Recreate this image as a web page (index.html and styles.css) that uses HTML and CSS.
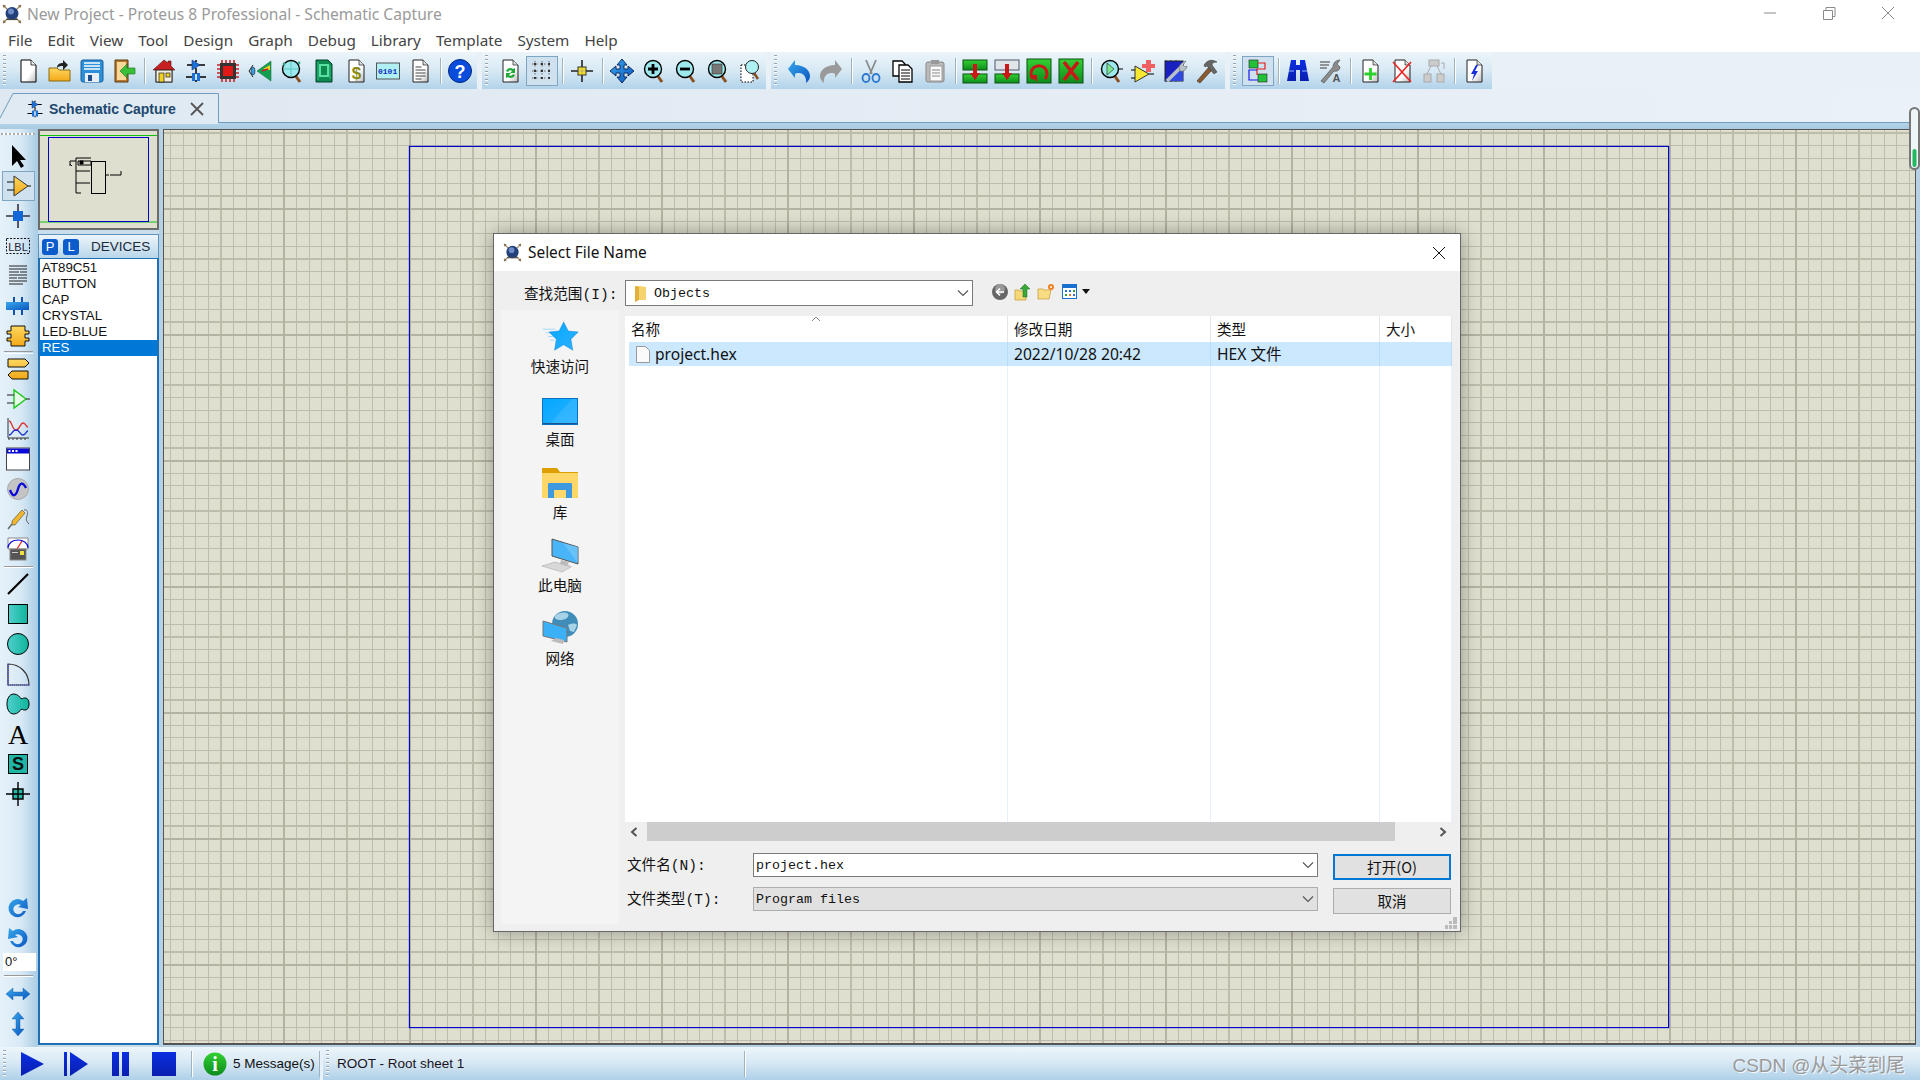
FILE: index.html
```html
<!DOCTYPE html>
<html lang="zh">
<head>
<meta charset="utf-8">
<title>New Project - Proteus 8 Professional - Schematic Capture</title>
<link rel="stylesheet" href="styles.css">
</head>
<body>
<svg class="defs" width="0" height="0">
  <defs>
    <linearGradient id="gB" x1="0" y1="0" x2="1" y2="1"><stop offset="0" stop-color="#39a9ec"/><stop offset="1" stop-color="#0a55c0"/></linearGradient>
    <linearGradient id="gV" x1="0" y1="0" x2="0" y2="1"><stop offset="0" stop-color="#0a2ee0"/><stop offset="1" stop-color="#0a1fb0"/></linearGradient>
    <linearGradient id="gY" x1="0" y1="0" x2="0" y2="1"><stop offset="0" stop-color="#ffd860"/><stop offset="1" stop-color="#f2a818"/></linearGradient>
    <linearGradient id="gG" x1="0" y1="0" x2="0" y2="1"><stop offset="0" stop-color="#33d033"/><stop offset="1" stop-color="#0c8c1c"/></linearGradient>
    <linearGradient id="gT" x1="0" y1="0" x2="1" y2="0"><stop offset="0" stop-color="#4fd0cc"/><stop offset="1" stop-color="#10b49c"/></linearGradient>
    <linearGradient id="gM" x1="0" y1="0" x2="1" y2="1"><stop offset="0" stop-color="#00a8ff"/><stop offset="1" stop-color="#30b0ff"/></linearGradient>
    <linearGradient id="gP" x1="0" y1="0" x2="1" y2="1"><stop offset=".6" stop-color="#fff"/><stop offset="1" stop-color="#b8b8b8"/></linearGradient>
    <symbol id="logo" viewBox="0 0 20 20">
      <path d="M1 1L19 19M19 1L1 19" stroke="#9c8258" stroke-width="1.200" fill="none"/>
      <path d="M1 1l3 .5-2.500 2.500zM19 1l-3 .5 2.500 2.500zM1 19l3-.5-2.500-2.500zM19 19l-3-.5 2.500-2.500z" fill="#7a6440"/>
      <circle cx="10" cy="9.500" r="6.500" fill="#24407a"/><circle cx="9" cy="7.500" r="3" fill="#6f8cc8"/>
      <path d="M4.500 15.500h11" stroke="#444" stroke-width="1.200"/>
    </symbol>
    <symbol id="schem" viewBox="0 0 24 24">
      <path d="M3 6h18M12 1v2M12 9v4" stroke="#000" stroke-width="1.500" fill="none"/>
      <path d="M8 1l8 5-8 5z" fill="#1a70d8" stroke="#103070" stroke-width=".6"/>
      <path d="M2 18h6M16 18h6M12 13v2M12 21v2" stroke="#000" stroke-width="1.500" fill="none"/>
      <rect x="8" y="14" width="3" height="8" fill="#1a70d8"/><rect x="13" y="14" width="3" height="8" fill="#1a70d8"/>
    </symbol>
    <symbol id="mag" viewBox="0 0 24 24">
      <path d="M15 16l5 7" stroke="#8a4f20" stroke-width="3" fill="none"/>
      <circle cx="11" cy="10" r="8.500" fill="#9ce8ec" stroke="#000" stroke-width="1.400"/>
    </symbol>
    <symbol id="page" viewBox="0 0 24 24">
      <path d="M5 1h10l5 5v17H5z" fill="url(#gP)" stroke="#222"/><path d="M15 1v5h5" fill="#ddd" stroke="#222" stroke-width=".7"/>
    </symbol>
  </defs>
</svg>

<div class="app">
  <header class="titlebar">
    <svg class="logo"><use href="#logo"/></svg>
    <span class="title">New Project - Proteus 8 Professional - Schematic Capture</span>
    <div class="winctl">
      <svg width="14" height="14" viewBox="0 0 14 14"><path d="M1 7h12" stroke="#8a8a8a"/></svg>
      <svg width="14" height="14" viewBox="0 0 14 14"><path d="M1.500 4.500h9v9h-9zM4 4.500V1.500h9v9h-2.500" fill="none" stroke="#8a8a8a"/></svg>
      <svg width="14" height="14" viewBox="0 0 14 14"><path d="M1 1l12 12M13 1L1 13" stroke="#8a8a8a"/></svg>
    </div>
  </header>

  <nav class="menubar">
    <span>File</span><span>Edit</span><span>View</span><span>Tool</span><span>Design</span><span>Graph</span><span>Debug</span><span>Library</span><span>Template</span><span>System</span><span>Help</span>
  </nav>

  <div class="toolbar">
    <div class="seg seg1">
      <i class="grip"></i>
      <div class="btn"><svg class="ic" viewBox="0 0 24 24"><path d="M5 1h10l5 5v17H5z" fill="url(#gP)" stroke="#000"/><path d="M15 1v5h5" fill="#eee" stroke="#000" stroke-width=".7"/></svg></div>
      <div class="btn"><svg class="ic" viewBox="0 0 24 24"><path d="M1 9h8l2 2h11v11H1z" fill="url(#gY)" stroke="#8a6a10"/><path d="M9 9c0-4 3-5 6-5V1l5 5-5 5V7c-2 0-4 0-6 2z" fill="#222"/></svg></div>
      <div class="btn"><svg class="ic" viewBox="0 0 24 24"><rect x="1" y="1" width="22" height="22" rx="2" fill="#2b90d9" stroke="#1a5f9c"/><path d="M4 4h16M4 7h16M4 10h16" stroke="#fff" stroke-width="1.600"/><rect x="5" y="14" width="14" height="9" fill="#e8eef4"/><rect x="8" y="16" width="4" height="6" fill="#1a4f8c"/></svg></div>
      <div class="btn"><svg class="ic" viewBox="0 0 24 24"><path d="M3 1h13v22H3z" fill="#b87a30" stroke="#5a3a10"/><path d="M5 3h9v18H5z" fill="#f6d99a"/><path d="M23 9h-8V5l-7 7 7 7v-4h8z" fill="#38c038" stroke="#187018" stroke-width=".6"/></svg></div>
      <i class="sep"></i>
      <div class="btn"><svg class="ic" viewBox="0 0 24 24"><path d="M12 1L1 11h3v12h16V11h3l-4-4V2h-3v2z" fill="#c82020" stroke="#501010" stroke-width=".6"/><rect x="4" y="11" width="16" height="12" fill="#f4efe0" stroke="#222"/><rect x="7" y="14" width="5" height="9" fill="#f0d020" stroke="#222" stroke-width=".7"/><rect x="14" y="14" width="4" height="4" fill="#f0d020" stroke="#222" stroke-width=".7"/></svg></div>
      <div class="btn"><svg class="ic"><use href="#schem"/></svg></div>
      <div class="btn"><svg class="ic" viewBox="0 0 24 24"><path d="M6 1v22M10 1v22M14 1v22M18 1v22M1 6h22M1 10h22M1 14h22M1 18h22" stroke="#d02020" stroke-width="1.600"/><rect x="4" y="4" width="16" height="16" fill="#333"/><rect x="7" y="7" width="10" height="10" fill="#e01818"/></svg></div>
      <div class="btn"><svg class="ic" viewBox="0 0 24 24"><path d="M5 6L1 12l4 6" fill="none" stroke="#222"/><ellipse cx="5" cy="12" rx="2" ry="4" fill="#38a0e0" stroke="#222" stroke-width=".6"/><path d="M23 2v20L9 12z" fill="#12a050" stroke="#0c6030" stroke-width=".5"/><path d="M15 10l7-4v5z" fill="#f0d020"/><path d="M14 12l6-2" stroke="#d02020" stroke-width="1.600"/></svg></div>
      <div class="btn"><svg class="ic"><use href="#mag"/><path d="M4 10h14M11 3v14" stroke="#5cc8c0"/><circle cx="4" cy="5" r="1.400" fill="#3a8"/><circle cx="19" cy="4" r="1.400" fill="#3a8"/></svg></div>
      <div class="btn"><svg class="ic" viewBox="0 0 24 24"><path d="M4 1h12l4 4v18H4z" fill="#0e8a50" stroke="#064028"/><path d="M8 6h8v11H8z" fill="none" stroke="#5ae0a0" stroke-width="2"/><path d="M6 3v18M18 6v14" stroke="#30c080"/></svg></div>
      <div class="btn"><svg class="ic"><use href="#page"/><text class="svgt dollar" x="12.500" y="19.500" text-anchor="middle">$</text></svg></div>
      <div class="btn"><svg class="ic" viewBox="0 0 24 24"><rect x=".5" y="4" width="23" height="16" fill="#aef0f4" stroke="#555"/><text class="svgt bin" x="2" y="15">0101</text></svg></div>
      <div class="btn"><svg class="ic"><use href="#page"/><path d="M7.500 8h6M7.500 11h10M7.500 14h10M7.500 17h10M7.500 20h6" stroke="#444"/></svg></div>
      <i class="sep"></i>
      <div class="btn"><svg class="ic" viewBox="0 0 24 24"><circle cx="12" cy="12" r="11.500" fill="#0a4cdc" stroke="#042a80"/><text class="svgt help" x="12" y="18.500" text-anchor="middle">?</text></svg></div>
    </div>

    <div class="seg seg2">
      <i class="grip"></i>
      <div class="btn"><svg class="ic"><use href="#page"/><path d="M8 12c1-3 5-4 7-2l2-1v5h-5l2-2c-1-1-3-1-4 1zM17 16c-1 3-5 4-7 2l-2 1v-5h5l-2 2c1 1 3 1 4-1z" fill="#22a838"/></svg></div>
      <div class="btn on"><svg class="ic" viewBox="0 0 24 24"><path d="M2 5h20M2 12h20M2 19h20M5 2v20M12 2v20M19 2v20" stroke="#666" stroke-dasharray="1.500 2.500" fill="none"/><path d="M4 4h2v2H4zM11 4h2v2h-2zM18 4h2v2h-2zM4 11h2v2H4zM11 11h2v2h-2zM18 11h2v2h-2zM4 18h2v2H4zM11 18h2v2h-2zM18 18h2v2h-2z" fill="#333"/></svg></div>
      <i class="sep"></i>
      <div class="btn"><svg class="ic" viewBox="0 0 24 24"><path d="M1 12h22M12 1v22" stroke="#222" stroke-width="1.600"/><rect x="8" y="8" width="8" height="8" fill="#f6e020" stroke="#333"/><path d="M12 8v8M8 12h8" stroke="#999" stroke-width=".6"/></svg></div>
      <i class="sep"></i>
      <div class="btn"><svg class="ic" viewBox="0 0 24 24"><path d="M12 0l5 6h-3v4h4V7l6 5-6 5v-3h-4v4h3l-5 6-5-6h3v-4H6v3l-6-5 6-5v3h4V6H7z" fill="url(#gB)" stroke="#0a2050" stroke-width=".9"/></svg></div>
      <div class="btn"><svg class="ic"><use href="#mag"/><path d="M6 10h10M11 5v10" stroke="#000" stroke-width="2.800"/></svg></div>
      <div class="btn"><svg class="ic"><use href="#mag"/><path d="M6 10h10" stroke="#000" stroke-width="2.800"/></svg></div>
      <div class="btn"><svg class="ic"><use href="#mag"/><rect x="6" y="5" width="10" height="10" fill="#777" stroke="#333" stroke-width=".6"/></svg></div>
      <div class="btn"><svg class="ic" viewBox="0 0 24 24"><rect x="3" y="6" width="12" height="17" fill="#fff" stroke="#000" stroke-dasharray="1.500 1.500"/><path d="M16 14l4 6" stroke="#8a4f20" stroke-width="2.500"/><circle cx="14" cy="8" r="6.500" fill="#aef0f4" stroke="#222"/></svg></div>
    </div>

    <div class="seg seg3">
      <i class="grip"></i>
      <div class="btn"><svg class="ic" viewBox="0 0 24 24"><path d="M1 10l7-9v5c9 0 15 5 15 11 0 2-1 5-4 7 1-6-3-10-7-10-2 0-3 0-4 1v4z" fill="url(#gB)"/></svg></div>
      <div class="btn"><svg class="ic" viewBox="0 0 24 24"><path d="M23 10L16 1v5C7 6 1 11 1 17c0 2 1 5 4 7-1-6 3-10 7-10 2 0 3 0 4 1v4z" fill="#9a9a9a"/></svg></div>
      <i class="sep"></i>
      <div class="btn"><svg class="ic" viewBox="0 0 24 24"><path d="M7 1l6 14M17 1l-6 14" stroke="#8a8a8a" stroke-width="1.800"/><ellipse cx="7" cy="19" rx="3.500" ry="4" fill="none" stroke="#2a78d0" stroke-width="1.800"/><ellipse cx="17" cy="19" rx="3.500" ry="4" fill="none" stroke="#2a78d0" stroke-width="1.800"/></svg></div>
      <div class="btn"><svg class="ic" viewBox="0 0 24 24"><path d="M2 2h9l3 3v12H2z" fill="#fff" stroke="#000" stroke-width="1.300"/><path d="M8 6h9l4 4v13H8z" fill="#fff" stroke="#000" stroke-width="1.300"/><path d="M10 11h9M10 14h9M10 17h9M10 20h9" stroke="#000"/></svg></div>
      <div class="btn"><svg class="ic" viewBox="0 0 24 24"><rect x="3" y="3" width="18" height="20" rx="2" fill="#bbb" stroke="#888"/><rect x="8" y="1" width="8" height="4" fill="#999"/><rect x="7" y="7" width="12" height="15" fill="#fafafa" stroke="#999"/><path d="M9 11h8M9 14h8M9 17h8" stroke="#888"/></svg></div>
      <i class="sep"></i>
      <div class="btn"><svg class="ic" viewBox="0 0 24 24"><rect width="24" height="10" fill="url(#gG)" stroke="#0a5010" y="1"/><rect y="15" width="24" height="9" fill="url(#gG)" stroke="#0a5010"/><path d="M10 5h4v9h3l-5 7-5-7h3z" fill="#c81818"/></svg></div>
      <div class="btn"><svg class="ic" viewBox="0 0 24 24"><rect y="1" width="24" height="10" fill="#dfe6ea" stroke="#556"/><rect y="15" width="24" height="9" fill="url(#gG)" stroke="#0a5010"/><path d="M10 5h4v9h3l-5 7-5-7h3z" fill="#c81818"/></svg></div>
      <div class="btn"><svg class="ic" viewBox="0 0 24 24"><rect width="24" height="24" fill="url(#gG)" stroke="#0a5010"/><path d="M6 20a8 8 0 1 1 12 0" fill="none" stroke="#c81818" stroke-width="3"/><path d="M3 16h7v7zM21 16h-6" fill="#c81818"/></svg></div>
      <div class="btn"><svg class="ic" viewBox="0 0 24 24"><rect width="24" height="24" fill="url(#gG)" stroke="#0a5010"/><path d="M5 3l14 18M19 3L5 21" stroke="#c81818" stroke-width="3.600"/></svg></div>
      <i class="sep"></i>
      <div class="btn"><svg class="ic"><use href="#mag"/><path d="M8 4v12l7-6z" fill="#7ce88c" stroke="#333" stroke-width=".7"/><path d="M19 10h5" stroke="#000"/></svg></div>
      <div class="btn"><svg class="ic" viewBox="0 0 24 24"><path d="M4 7v16l14-8z" fill="#f8e830" stroke="#333"/><path d="M0 11h4M0 19h4M18 15h5" stroke="#000"/><path d="M15 1h5v4h4v4h-4v4h-5V9h-4V5h4z" fill="#f06060"/></svg></div>
      <div class="btn"><svg class="ic" viewBox="0 0 24 24"><path d="M3 1v22M8 1v22M13 1v22" stroke="#555" stroke-dasharray="2 2"/><rect x="2" y="2" width="18" height="20" fill="#1a20c0" stroke="#222"/><path d="M2 22L20 4v18z" fill="#3048e0"/><path d="M4 22L18 8" stroke="#b8c0c8" stroke-width="3.500"/><path d="M16 9c0-3 3-6 7-7l-3 4 2 2 2-1c0 4-4 6-7 5z" fill="#b8c0c8" stroke="#555" stroke-width=".5"/></svg></div>
      <div class="btn"><svg class="ic" viewBox="0 0 24 24"><path d="M2 22L14 8l3 3L5 24z" fill="#8a5a30" stroke="#3a2410" stroke-width=".6"/><path d="M9 6c3-5 8-6 13-3-3 0-5 1-5 3l5 7-3 2-7-8-2 1z" fill="#666" stroke="#333" stroke-width=".5"/></svg></div>
    </div>

    <div class="seg seg4">
      <i class="grip"></i>
      <div class="btn on"><svg class="ic" viewBox="0 0 24 24"><rect x="3" y="1" width="9" height="8" fill="#22c038" stroke="#222" stroke-width=".6"/><rect x="12" y="15" width="9" height="8" fill="#22c038" stroke="#222" stroke-width=".6"/><path d="M12 4h7v6h-8v6" fill="none" stroke="#e81818" stroke-width="1.200"/><path d="M11 11H3v10h9" fill="none" stroke="#1818e8" stroke-width="1.200"/></svg></div>
      <i class="sep"></i>
      <div class="btn"><svg class="ic" viewBox="0 0 24 24"><path d="M5 1h5v5h4V1h5l4 21h-9V11h-4v11H1z" fill="url(#gV)"/><path d="M3 12h5M16 12h5" stroke="#90b8ff"/></svg></div>
      <div class="btn"><svg class="ic" viewBox="0 0 24 24"><path d="M2 3h10M2 6h9M2 9h7" stroke="#777" stroke-width="1.500"/><path d="M3 22L15 8c0-4 3-7 7-7l-3 4 3 3c0 3-3 5-6 4L6 24z" fill="#8c8c8c" stroke="#444" stroke-width=".6"/><text class="svgt wrenchA" x="14.500" y="23">A</text></svg></div>
      <i class="sep"></i>
      <div class="btn"><svg class="ic"><use href="#page"/><path d="M12.500 9v12M6.500 15h12" stroke="#2cd02c" stroke-width="2.800"/></svg></div>
      <div class="btn"><svg class="ic"><use href="#page"/><path d="M3 3l18 20M21 3L3 23" stroke="#f02020" stroke-width="1.600"/></svg></div>
      <div class="btn"><svg class="ic" viewBox="0 0 24 24"><rect x="7" y="1" width="10" height="6" fill="#ccc" stroke="#aaa"/><rect x="2" y="15" width="7" height="8" fill="#ccc" stroke="#aaa"/><rect x="15" y="15" width="7" height="8" fill="#ccc" stroke="#aaa"/><path d="M9 7l-4 8M15 7l4 8M19 4h3v6" fill="none" stroke="#aaa"/></svg></div>
      <i class="sep"></i>
      <div class="btn"><svg class="ic"><use href="#page"/><path d="M14 6l-5 9h3l-2 7 6-10h-3l3-6z" fill="#1830e0"/></svg></div>
    </div>
  </div>

  <div class="tabbar">
    <div class="tab">
      <svg class="tabshape" width="219" height="31" viewBox="0 0 219 31"><path d="M0 25L13 .5H218.500V31H0z" fill="#e0eaf3"/><path d="M0 25L13 .5H218.500V30" fill="none" stroke="#6f9dbd"/></svg>
      <svg class="tabicon"><use href="#schem"/></svg>
      <span class="tablabel">Schematic Capture</span>
      <svg class="tabx" width="14" height="14" viewBox="0 0 14 14"><path d="M1 1l12 12M13 1L1 13" stroke="#555" stroke-width="1.800"/></svg>
    </div>
  </div>
  <div class="band"></div>

  <main class="main">
    <aside class="tools">
      <i class="hgrip"></i>
      <div class="tool"><svg class="ic" viewBox="0 0 24 24"><path d="M6 1v21l5-5 4 7 3-2-4-6h6z" fill="#000"/></svg></div>
      <div class="tool on"><svg class="ic" viewBox="0 0 24 24"><path d="M7 2v20l14-10z" fill="url(#gY)" stroke="#333"/><path d="M0 8h7M0 16h7M21 12h3" stroke="#111"/></svg></div>
      <div class="tool"><svg class="ic" viewBox="0 0 24 24"><path d="M0 12h24M12 0v24" stroke="#334" stroke-width="1.600"/><rect x="7" y="7" width="10" height="10" fill="#1466d8"/></svg></div>
      <div class="tool"><svg class="ic" viewBox="0 0 24 24"><rect x=".5" y="4.500" width="23" height="15" fill="none" stroke="#111" stroke-dasharray="2 1.500"/><text class="svgt lbl" x="12" y="16.500" text-anchor="middle">LBL</text></svg></div>
      <div class="tool"><svg class="ic" viewBox="0 0 24 24"><path d="M3 2h18M3 5h18M3 8h10M14 8h7M3 11h18M3 14h8M12 14h9M3 17h18M3 20h14" stroke="#222"/></svg></div>
      <div class="tool"><svg class="ic" viewBox="0 0 24 24"><rect y="8" width="23" height="8" fill="url(#gB)"/><path d="M8 3v5M16 3v5M8 16v5M16 16v5" stroke="#1050b0" stroke-width="2"/></svg></div>
      <div class="tool"><svg class="ic" viewBox="0 0 24 24"><path d="M5 2h14v5h4v3h-4v4h4v3h-4v5H5v-5H1v-3h4v-4H1V7h4z" fill="url(#gY)" stroke="#111"/></svg></div>
      <i class="tsep"></i>
      <div class="tool"><svg class="ic" viewBox="0 0 24 24"><path d="M2 2h17l4 4-4 4H2zM22 14H6l-4 4 4 4h16z" fill="url(#gY)" stroke="#111"/></svg></div>
      <div class="tool"><svg class="ic" viewBox="0 0 24 24"><path d="M8 3v18l12-9z" fill="#e8fbe8" stroke="#1cc81c" stroke-width="1.400"/><path d="M1 8h7M1 16h7M20 12h4" stroke="#222"/></svg></div>
      <div class="tool"><svg class="ic" viewBox="0 0 24 24"><path d="M2 1v20h21M3 23v-2M7 23v-2M11 23v-2M15 23v-2M19 23v-2" fill="none" stroke="#333"/><path d="M3 4c3 0 3 9 7 9s4-7 7-7 3 4 5 4" fill="none" stroke="#e03030" stroke-width="1.300"/><path d="M3 18c3 0 3-5 7-5s4 5 7 5 3-4 5-4" fill="none" stroke="#1a30d0" stroke-width="1.300"/></svg></div>
      <div class="tool"><svg class="ic" viewBox="0 0 24 24"><rect x=".5" y="1" width="23" height="22" fill="#fff" stroke="#444"/><rect x="1" y="1.500" width="22" height="5" fill="#0a0ad8"/><path d="M2.500 3h2v2h-2zM6 3h2v2H6zM9.500 3h2v2h-2z" fill="#fff"/></svg></div>
      <div class="tool"><svg class="ic" viewBox="0 0 24 24"><circle cx="12" cy="12" r="10.500" fill="#c4c4c4" stroke="#aaa"/><path d="M4 13c3 8 6 6 8-1s5-7 8-1" fill="none" stroke="#0a0ad8" stroke-width="2.400"/></svg></div>
      <div class="tool"><svg class="ic" viewBox="0 0 24 24"><path d="M6 14L16 3l3 3L9 18l-3 0z" fill="#f2b62c" stroke="#444" stroke-width=".6"/><path d="M6 17l-4 5" stroke="#666" stroke-width="1.400"/><path d="M18 3c4-1 4 3 3 6s-1 5 2 8" fill="none" stroke="#666"/></svg></div>
      <div class="tool"><svg class="ic" viewBox="0 0 24 24"><path d="M2 1h20v11H2z" fill="#fff" stroke="#888"/><path d="M2 11a10 8 0 0 1 20 0" fill="#fff" stroke="#0a0ad8" stroke-width="1.200"/><path d="M11 12l5-8" stroke="#e82020" stroke-width="1.300"/><rect x="4" y="12" width="16" height="11" fill="#555" stroke="#888"/><rect x="14" y="14" width="4" height="4" fill="#f0e040"/><rect x="6" y="15" width="6" height="1" fill="#ccc"/></svg></div>
      <i class="tsep tsep2"></i>
      <div class="tool"><svg class="ic" viewBox="0 0 24 24"><path d="M2 22L22 2" stroke="#000" stroke-width="2.200"/></svg></div>
      <div class="tool"><svg class="ic" viewBox="0 0 24 24"><rect x="2.500" y="2.500" width="19" height="19" fill="url(#gT)" stroke="#000"/></svg></div>
      <div class="tool"><svg class="ic" viewBox="0 0 24 24"><circle cx="12" cy="12" r="10.500" fill="url(#gT)" stroke="#000"/></svg></div>
      <div class="tool"><svg class="ic" viewBox="0 0 24 24"><path d="M2 23V2c12 0 21 9 21 21z" fill="none" stroke="#333" stroke-width="1.200"/><path d="M2 23V2M2 23h21" stroke="#3a3ae0" stroke-dasharray="1 1" stroke-width="1.200"/></svg></div>
      <div class="tool"><svg class="ic" viewBox="0 0 24 24"><path d="M8 2c4 0 6 4 8 5 1-1 2-1 3-1 3 0 4 3 4 6s-1 6-4 6c-1 0-2 0-3-1-2 1-4 5-8 5-5 0-7-5-7-10S3 2 8 2z" fill="url(#gT)" stroke="#000"/></svg></div>
      <div class="tool"><svg class="ic" viewBox="0 0 24 24"><text class="svgt bigA" x="12" y="22" text-anchor="middle">A</text></svg></div>
      <div class="tool"><svg class="ic" viewBox="0 0 24 24"><rect x="2.500" y="2.500" width="19" height="19" fill="#1fb6a6" stroke="#000"/><text class="svgt bigS" x="12" y="18" text-anchor="middle">S</text></svg></div>
      <div class="tool"><svg class="ic" viewBox="0 0 24 24"><rect x="7" y="7" width="10" height="10" fill="#22b8a8"/><path d="M0 12h24M12 0v24M7 7h10v10H7z" fill="none" stroke="#000" stroke-width="1.400"/></svg></div>
      <div class="tools-bottom">
        <div class="tool"><svg class="ic" viewBox="0 0 24 24"><path d="M20 15a9 9 0 1 1-3-10l4-3 1 11-10-2 3-2a5 5 0 1 0 2 6z" fill="url(#gB)"/></svg></div>
        <div class="tool"><svg class="ic" viewBox="0 0 24 24"><path d="M4 15a9 9 0 1 0 3-10L3 2 2 13l10-2-3-2a5 5 0 1 1-2 6z" fill="url(#gB)"/></svg></div>
        <div class="angle">0°</div>
        <i class="tsep tsep3"></i>
        <div class="tool"><svg class="ic" viewBox="0 0 24 24"><path d="M0 12l7-6v4h10V6l7 6-7 6v-4H7v4z" fill="url(#gB)" stroke="#0a50a0" stroke-width=".4"/></svg></div>
        <div class="tool"><svg class="ic" viewBox="0 0 24 24"><path d="M12 0l6 7h-4v10h4l-6 7-6-7h4V7H6z" fill="url(#gB)" stroke="#0a50a0" stroke-width=".4"/></svg></div>
      </div>
    </aside>

    <section class="panel">
      <div class="preview">
        <svg class="previewsvg" width="117" height="97" viewBox="0 0 117 97">
          <path d="M0 4.500h117M0 91h117" stroke="#10c010" fill="none"/>
          <rect x="8.500" y="6.500" width="100" height="84" fill="none" stroke="#0000c8"/>
          <rect x="51.500" y="30.500" width="14" height="32" fill="none" stroke="#000"/>
          <path d="M70 44h8M78 44h3v-4M51 27H36v3h-6v5M36 30v32M38 30h13v4H38zM36 40h14M36 52h14M36 62h5M65 44h4" fill="none" stroke="#000"/>
          <path d="M40 30h3v3h-3zM30 33l2 2" fill="#000" stroke="#000"/>
        </svg>
      </div>
      <div class="devhead">
        <span class="pl">P</span><span class="pl">L</span><span class="devtitle">DEVICES</span>
      </div>
      <ul class="devlist">
        <li>AT89C51</li><li>BUTTON</li><li>CAP</li><li>CRYSTAL</li><li>LED-BLUE</li><li class="sel">RES</li>
      </ul>
    </section>

    <section class="canvas">
      <div class="sheet"></div>
    </section>
  </main>

  <footer class="status">
    <i class="grip grip-s"></i>
    <div class="sbtn"><svg width="24" height="24" viewBox="0 0 24 24"><path d="M1 0v24l23-12z" fill="url(#gV)"/></svg></div>
    <div class="sbtn"><svg width="24" height="24" viewBox="0 0 24 24"><path d="M0 0h3v24H0zM6 0v24l18-12z" fill="url(#gV)"/></svg></div>
    <div class="sbtn"><svg width="24" height="24" viewBox="0 0 24 24"><path d="M4 0h7v24H4zM14 0h7v24h-7z" fill="url(#gV)"/></svg></div>
    <div class="sbtn"><svg width="24" height="24" viewBox="0 0 24 24"><rect width="24" height="24" fill="url(#gV)"/></svg></div>
    <i class="vsep vsep-a"></i>
    <svg class="infoicon" width="24" height="24" viewBox="0 0 24 24"><circle cx="12" cy="12" r="11.500" fill="url(#gG)"/><text class="svgt info" x="12" y="19" text-anchor="middle">i</text></svg>
    <span class="msgs">5 Message(s)</span>
    <i class="vsep vsep-b"></i>
    <i class="sgap"></i>
    <i class="grip grip-s2"></i>
    <span class="sheetname">ROOT - Root sheet 1</span>
    <i class="vsep vsep-c"></i>
    <span class="watermark">CSDN @从头菜到尾</span>
  </footer>

  <svg class="pill" width="11" height="63" viewBox="0 0 11 63"><rect x="1" y="1" width="9" height="61" rx="4.500" fill="#eef6f8" stroke="#777" stroke-width="2"/><rect x="3.500" y="42" width="4" height="18" rx="2" fill="#22b860"/></svg>

  <div class="dialog">
    <div class="dlg-title">
      <svg class="dlg-logo"><use href="#logo"/></svg>
      <span class="dlg-name">Select File Name</span>
      <svg class="dlg-x" width="14" height="14" viewBox="0 0 14 14"><path d="M1 1l12 12M13 1L1 13" stroke="#111"/></svg>
    </div>
    <div class="dlg-look">
      <span class="look-label mixed">查找范围(I):</span>
      <div class="combo">
        <svg class="folder" width="13" height="18" viewBox="0 0 13 18"><path d="M1 2h5l6 1v13H4l-3 2z" fill="#f6d36c"/><path d="M1 2l4 1v13l-4 2z" fill="#e2b03c"/></svg>
        <span class="mono">Objects</span>
        <svg class="chev" width="12" height="8" viewBox="0 0 12 8"><path d="M1 1.500l5 5 5-5" fill="none" stroke="#555" stroke-width="1.100"/></svg>
      </div>
      <div class="look-tools">
        <svg width="18" height="18" viewBox="0 0 18 18"><circle cx="9" cy="9" r="8" fill="#666"/><circle cx="9" cy="6" r="5" fill="#999"/><path d="M13 9H6M9 5.500L5.500 9 9 12.500" fill="none" stroke="#fff" stroke-width="1.600"/></svg>
        <svg width="18" height="18" viewBox="0 0 18 18"><path d="M1 7h4l1 1h6v9H1z" fill="#f6d878" stroke="#c49a30" stroke-width=".7"/><path d="M9 14V6H6l5-5 5 5h-3v8z" fill="#3aa838" stroke="#1a7018" stroke-width=".5"/></svg>
        <svg width="18" height="18" viewBox="0 0 18 18"><path d="M1 6h5l1 1h7l-2 9H1z" fill="#f8dc84" stroke="#c49a30" stroke-width=".7"/><circle cx="14" cy="4" r="3" fill="#f08020"/><circle cx="14" cy="4" r="1" fill="#fff"/></svg>
        <div class="viewbtn">
          <svg width="15" height="15" viewBox="0 0 15 15"><rect x=".5" y=".5" width="14" height="14" fill="#fff" stroke="#1a70d0"/><rect x="1" y="1" width="13" height="3" fill="#1a70d0"/><path d="M3 6h2v2H3zM7 6h2v2H7z" fill="#2a70d8"/><path d="M11 6h2v2h-2z" fill="#30a030"/><path d="M3 10h2v2H3z" fill="#30a030"/><path d="M7 10h2v2H7z" fill="#e08020"/><path d="M11 10h2v2h-2z" fill="#2a70d8"/></svg>
          <i class="caret"></i>
        </div>
      </div>
    </div>
    <div class="dlg-main">
      <div class="places">
        <div class="place p-star">
          <svg width="40" height="34" viewBox="0 0 40 34"><path d="M1 9h14M4 13h10M7 17h6M9 21h5" stroke="#9ed6f6"/><path d="M24 1l5 10 11 1-8 8 2 12-10-6-10 6 2-12-8-8 11-1z" fill="url(#gM)" stroke="#0a80d8" stroke-width=".5"/></svg>
          <span>快速访问</span>
        </div>
        <div class="place">
          <svg width="36" height="27" viewBox="0 0 36 27"><rect x=".5" y=".5" width="35" height="26" fill="url(#gM)" stroke="#0a70c0"/><path d="M8 26L30 1h5v25z" fill="#4cc0ff" opacity=".4"/><rect x="1" y="25" width="34" height="1" fill="#16568c"/></svg>
          <span>桌面</span>
        </div>
        <div class="place">
          <svg width="36" height="31" viewBox="0 0 36 31"><path d="M0 1h15l3 4h18v26H0z" fill="#dd9f00"/><path d="M0 6h36v24a1 1 0 0 1-1 1H0z" fill="#ffd668"/><path d="M6 31V17a1 1 0 0 1 1-1h22a1 1 0 0 1 1 1v14h-6v-8H12v8z" fill="#3d9ae0"/></svg>
          <span>库</span>
        </div>
        <div class="place place-tight">
          <svg width="38" height="35" viewBox="0 0 38 35"><path d="M11 1l26 8v17L11 18z" fill="#4ab4f8" stroke="#555"/><path d="M22 5l15 20V9z" fill="#86d0fc" opacity=".5"/><path d="M20 22l8 2-1 3 6 2-14-3z" fill="#bbb"/><path d="M1 28l13-4 16 5-9 5z" fill="#d8d8d8" stroke="#aaa" stroke-width=".6"/></svg>
          <span>此电脑</span>
        </div>
        <div class="place place-tight">
          <svg width="36" height="35" viewBox="0 0 36 35"><circle cx="23" cy="13" r="13" fill="#3f8db8"/><path d="M14 4c5-3 10-3 12-1s-2 6-7 6-8-2-5-5zM26 14c4-2 8-2 9 0l-3 7-4-1z" fill="#a6d4e6"/><path d="M1 10l24 7v14L1 25z" fill="#3cb0f6" stroke="#777"/><path d="M14 27l8 2-1 4-12-3z" fill="#bbb"/></svg>
          <span>网络</span>
        </div>
      </div>
      <div class="right">
        <div class="filelist">
          <svg class="sortup" width="10" height="6" viewBox="0 0 10 6"><path d="M1 5l4-4 4 4" fill="none" stroke="#888"/></svg>
          <div class="fl-row fl-head"><span>名称</span><span>修改日期</span><span>类型</span><span>大小</span></div>
          <div class="fl-row fl-sel">
            <span class="fname"><svg width="14" height="17" viewBox="0 0 14 17"><path d="M.5.500h9l4 4v12H.5z" fill="#fafafa" stroke="#999"/></svg>project.hex</span>
            <span>2022/10/28 20:42</span><span>HEX 文件</span><span></span>
          </div>
          <div class="fl-row fl-fill"><span></span><span></span><span></span><span></span></div>
        </div>
        <div class="hscroll">
          <svg class="sarrow" width="8" height="10" viewBox="0 0 8 10"><path d="M6.500 1L2 5l4.500 4" fill="none" stroke="#555" stroke-width="2"/></svg>
          <div class="thumb"></div>
          <svg class="sarrow" width="8" height="10" viewBox="0 0 8 10"><path d="M1.500 1L6 5 1.500 9" fill="none" stroke="#555" stroke-width="2"/></svg>
        </div>
        <div class="form">
          <span class="flabel mixed">文件名(N):</span>
          <div class="field edit"><span class="mono">project.hex</span><svg class="chev" width="12" height="8" viewBox="0 0 12 8"><path d="M1 1.500l5 5 5-5" fill="none" stroke="#555" stroke-width="1.100"/></svg></div>
          <button class="dbtn dbtn-def">打开(O)</button>
          <span class="flabel mixed">文件类型(T):</span>
          <div class="field sel"><span class="mono">Program files</span><svg class="chev" width="12" height="8" viewBox="0 0 12 8"><path d="M1 1.500l5 5 5-5" fill="none" stroke="#555" stroke-width="1.100"/></svg></div>
          <button class="dbtn">取消</button>
        </div>
      </div>
    </div>
    <svg class="resize" width="12" height="12" viewBox="0 0 12 12"><path d="M8 0h4v4H8zM4 4h3v3H4zM8 4h4v3H8zM0 8h3v4H0zM4 8h3v4H4zM8 8h4v4H8z" fill="#bbb"/></svg>
  </div>
</div>
</body>
</html>
```
FILE: styles.css
```css
* { box-sizing: border-box; }
html, body { margin: 0; padding: 0; }
body { width: 1920px; height: 1080px; overflow: hidden; background: #fff; font-family: "Noto Sans", "Noto Sans CJK SC", sans-serif; color: #111; }
.defs { position: absolute; }
.app { position: relative; width: 1920px; height: 1080px; display: flex; flex-direction: column; background: #fff; }
i { display: block; font-style: normal; }
.ic { width: 24px; height: 24px; display: block; overflow: visible; }
.svgt { font-family: "Liberation Sans", sans-serif; }
.dollar { font-size: 17px; font-weight: 700; fill: #8a8a10; }
.bin { font-family: "Liberation Mono", monospace; font-size: 8px; font-weight: 700; fill: #1030c0; }
.help { font-size: 18px; font-weight: 700; fill: #fff; }
.wrenchA { font-size: 11px; font-weight: 700; fill: #555; }
.lbl { font-size: 11px; fill: #223; }
.bigA { font-family: "Liberation Serif", serif; font-size: 28px; fill: #000; }
.bigS { font-size: 18px; font-weight: 700; fill: #111; }
.info { font-family: "Liberation Serif", serif; font-size: 20px; font-weight: 700; fill: #fff; }

/* title and menu */
.titlebar { height: 26px; display: flex; align-items: center; padding: 2px 0 0 2px; background: #fff; }
.logo { width: 20px; height: 20px; margin-top: -1px; }
.title { margin-left: 5px; font-size: 15.6px; color: #9a9a9a; white-space: nowrap; }
.winctl { margin-left: auto; display: flex; gap: 45px; padding-right: 25px; margin-top: -2px; }
.menubar { height: 26px; display: flex; align-items: center; gap: 15px; padding: 2px 0 0 8px; font-size: 15.3px; color: #444; background: #fff; }

/* main toolbar */
.toolbar { height: 37px; display: flex; gap: 5px; background: #e9f1f7; }
.seg { display: flex; align-items: center; height: 37px; background: linear-gradient(#ecf5fa, #d8e9f4 50%, #b2d3ea); }
.seg1 { width: 477px; }
.seg2 { width: 284px; }
.seg3 { width: 454px; }
.seg4 { width: 262px; }
.grip { width: 3px; height: 31px; margin: 0 6px 0 3px; background: repeating-linear-gradient(#9aa4ac 0 1px, #fff 1px 2px, transparent 2px 4px); }
.sep { width: 1px; height: 26px; margin: 0 3.5px; background: #9fb2c0; box-shadow: 1px 0 0 #fff; }
.btn { width: 32px; height: 37px; display: flex; align-items: center; justify-content: center; flex: none; }
.btn.on { height: 30px; background: #cfe1ef; outline: 1px solid #7ea6c2; outline-offset: -1px; }

/* tabs */
.tabbar { height: 34px; padding-top: 4px; display: flex; background: linear-gradient(90deg, #dfe7f0, #eaf1f8); border-bottom: 1px solid #6f9dbd; }
.tab { position: relative; width: 219px; height: 31px; display: flex; align-items: center; padding-left: 26px; }
.tabshape { position: absolute; left: 0; top: 0; }
.tabicon { position: relative; width: 18px; height: 22px; }
.tablabel { position: relative; margin-left: 5px; font-family: "Liberation Sans", sans-serif; font-weight: 700; font-size: 14px; color: #20486e; white-space: nowrap; }
.tabx { position: relative; margin-left: 14px; }
.band { height: 6px; background: linear-gradient(#b4d3e8, #a8cbe3); }

/* main area */
.main { flex: 1; display: flex; background: #b6d1e4; padding-right: 4px; }
.tools { width: 38px; display: flex; flex-direction: column; flex: none; background: linear-gradient(90deg, #e6f2fa, #d8e9f5 55%, #a9cce4); padding: 2px 2px 0 0; }
.hgrip { height: 2px; margin: 2px 1px 6px; background: repeating-linear-gradient(90deg, #aaa 0 2px, #fff 2px 4px); }
.tool { height: 30px; display: flex; align-items: center; justify-content: center; flex: none; }
.tool.on { background: #cfe1ef; outline: 1px solid #7ea6c2; outline-offset: -1px; margin: 0 1px 0 2px; }
.tsep { height: 3px; margin: 0 3px 0 4px; border-top: 1px solid #999; border-bottom: 1px solid #fff; flex: none; background: none; }
.tsep2 { height: 5px; border: none; background: linear-gradient(transparent 2px, #999 2px 3px, #fff 3px 4px, transparent 4px); }
.tsep3 { height: 8px; border: none; background: linear-gradient(transparent 4px, #999 4px 5px, #fff 5px 6px, transparent 6px); }
.tools-bottom { margin-top: auto; padding-bottom: 8px; }
.angle { height: 18px; margin: 0 0 0 3px; background: #fff; font-family: "Liberation Sans", sans-serif; font-size: 13px; line-height: 18px; padding-left: 2px; color: #111; }

/* side panel */
.panel { width: 121px; flex: none; display: flex; flex-direction: column; background: #c9ddeb; padding-bottom: 2px; }
.preview { height: 101px; border: 2px solid #6b6b6b; background: #dfdfcf; flex: none; }
.previewsvg { display: block; }
.devhead { margin-top: 4px; height: 24px; flex: none; display: flex; align-items: center; padding-left: 3px; gap: 5px; border: 1px solid #5c94bf; border-bottom: none; background: linear-gradient(#edf5fb, #b9d6ea); }
.pl { width: 16px; height: 16px; border-radius: 3px; background: #0c5ccc; color: #fff; font-family: "Liberation Sans", sans-serif; font-size: 13px; line-height: 16px; text-align: center; }
.devtitle { margin-left: 7px; font-family: "Liberation Sans", sans-serif; font-size: 13.5px; color: #1c2a3a; }
.devlist { flex: 1; margin: 0; padding: 1px 0 0; list-style: none; background: #fff; border: 2px solid #1e6fb4; border-top-width: 1px; font-family: "Liberation Sans", sans-serif; font-size: 13.3px; color: #111; }
.devlist li { height: 16px; line-height: 16px; padding-left: 2px; }
.devlist .sel { background: #0078d7; color: #fff; }

/* drawing canvas */
.canvas { position: relative; flex: 1; margin: 0 0 2px 4px; border: 1px solid #555; border-bottom-width: 2px; background-color: #dfdfcf; background-origin: border-box;
  background-image:
    repeating-linear-gradient(90deg, transparent 0 120px, #b4b3a1 120px 122px, transparent 122px 126px),
    repeating-linear-gradient(180deg, transparent 0 79px, #b4b3a1 79px 81px, transparent 81px 126px),
    repeating-linear-gradient(90deg, transparent 0 7px, #bebdac 7px 8.15px, transparent 8.15px 12.6px),
    repeating-linear-gradient(180deg, transparent 0 3.4px, #bebdac 3.4px 4.55px, transparent 4.55px 12.6px); }
.sheet { position: absolute; left: 245px; top: 16px; width: 1260px; height: 882px; border: 1px solid #0000c8; box-shadow: 0 0 1px #0000c8; }

/* status */
.status { height: 33px; display: flex; align-items: center; background: linear-gradient(#ecf5fb, #d9e9f5 45%, #aed0e8); font-family: "Liberation Sans", sans-serif; font-size: 13.5px; color: #111; }
.grip-s { margin: 0 1px 0 3px; height: 28px; width: 3px; }
.sbtn { width: 44px; height: 33px; display: flex; align-items: center; justify-content: center; flex: none; }
.grip-s + .sbtn { margin-left: 3px; }
.vsep { width: 1px; height: 26px; background: #9fb2c0; box-shadow: 1px 0 0 #fff; flex: none; }
.vsep-a { margin-left: 5px; }
.infoicon { margin-left: 11px; flex: none; }
.msgs { margin-left: 6px; white-space: nowrap; width: 82px; }
.vsep-b { margin-left: 4px; }
.sgap { width: 3px; height: 33px; background: #e8f1f7; }
.grip-s2 { margin: 0 8px 0 3px; height: 28px; }
.sheetname { white-space: nowrap; width: 407px; color: #1a1420; }
.watermark { margin-left: auto; padding-right: 15px; font-family: "Liberation Sans", "Noto Sans CJK SC", sans-serif; font-size: 18.9px; color: #9a9a9a; text-shadow: 1px 1px 0 #f4f8fb; white-space: nowrap; }

.pill { position: absolute; left: 1909px; top: 107px; }

/* dialog */
.dialog { position: absolute; left: 493px; top: 233px; width: 968px; height: 699px; background: #efefef; border: 1px solid #666; box-shadow: 0 0 18px rgba(0,0,0,.35); display: flex; flex-direction: column; font-family: "Noto Sans CJK SC", "Noto Sans", sans-serif; font-size: 14.6px; color: #111; }
.dlg-title { height: 37px; flex: none; background: #fff; display: flex; align-items: center; padding-left: 9px; }
.dlg-logo { width: 19px; height: 19px; }
.dlg-name { margin-left: 6px; font-family: "Noto Sans", sans-serif; font-size: 15.4px; color: #111; }
.dlg-x { margin-left: auto; margin-right: 14px; }
.dlg-look { height: 26px; margin-top: 9px; display: flex; align-items: center; flex: none; }
.mixed { font-family: "Liberation Mono", "Noto Sans CJK SC", monospace; }
.look-label { width: 131px; padding-left: 30px; white-space: nowrap; margin-top: -2px; }
.combo { width: 348px; height: 26px; background: #fff; border: 1px solid #7a7a7a; display: flex; align-items: center; padding-left: 8px; }
.folder { flex: none; }
.mono { font-family: "Liberation Mono", monospace; font-size: 13.33px; color: #111; white-space: nowrap; }
.combo .mono { margin-left: 7px; }
.chev { margin-left: auto; margin-right: 3px; flex: none; }
.look-tools { display: flex; align-items: center; gap: 5px; margin-left: 18px; margin-top: -3px; }
.viewbtn { display: flex; align-items: center; gap: 3px; margin-left: 2px; }
.caret { width: 0; height: 0; border: 4px solid transparent; border-top: 5px solid #111; border-bottom: none; margin-left: 2px; }
.dlg-main { flex: 1; display: flex; margin-top: 4px; padding: 0 7px 7px 7px; min-height: 0; }
.places { width: 118px; flex: none; background: #f4f4f4; display: flex; flex-direction: column; align-items: center; font-size: 14.6px; padding-top: 11px; }
.place { width: 100%; height: 73px; flex: none; display: flex; flex-direction: column; align-items: center; justify-content: flex-end; padding-bottom: 12px; gap: 4px; line-height: 20px; }
.place-tight { gap: 2px; }
.p-star { height: 67px; }
.right { margin-left: 6px; width: 827px; display: flex; flex-direction: column; }
.filelist { position: relative; margin-top: 6px; height: 506px; background: #fff; display: flex; flex-direction: column; flex: none; }
.sortup { position: absolute; left: 186px; top: 0; }
.fl-row { display: grid; grid-template-columns: 383px 203px 169px 1fr; flex: none; }
.fl-row > span { padding-left: 6px; white-space: nowrap; overflow: hidden; }
.fl-head { height: 26px; line-height: 26px; font-size: 14.6px; }
.fl-head > span { border-right: 1px solid #e5e5e5; }
.fl-sel { height: 24px; line-height: 24px; background: #cce8ff; margin-left: 4px; grid-template-columns: 379px 203px 169px 1fr; font-size: 15.6px; }
.fl-sel > span { border-right: 1px solid #b9dcf8; font-family: "Noto Sans", "Noto Sans CJK SC", sans-serif; }
.fname { display: flex; align-items: center; gap: 5px; padding-left: 7px !important; }
.fl-fill { flex: 1; }
.fl-fill > span { border-right: 1px solid #e6effa; }
.hscroll { height: 19px; flex: none; display: flex; align-items: center; justify-content: space-between; padding: 0 5px; position: relative; }
.thumb { flex: none; width: 748px; height: 19px; background: #cdcdcd; margin-left: 8px; margin-right: 43px; }
.sarrow { flex: none; }
.form { margin-top: 12px; display: grid; grid-template-columns: 128px 565px 134px; grid-auto-rows: 27px; row-gap: 7px; align-items: start; }
.flabel { line-height: 27px; padding-left: 2px; white-space: nowrap; }
.field { height: 24px; display: flex; align-items: center; padding-left: 2px; border: 1px solid #7a7a7a; background: #fff; }
.field.sel { background: #e1e1e1; border-color: #adadad; }
.dbtn { margin-left: 15px; margin-top: 1px; width: 118px; height: 26px; padding: 0; background: #e1e1e1; border: 1px solid #adadad; font: inherit; color: #111; line-height: 22px; }
.dbtn-def { border: 2px solid #0078d7; }
.resize { position: absolute; right: 3px; bottom: 2px; }
```
